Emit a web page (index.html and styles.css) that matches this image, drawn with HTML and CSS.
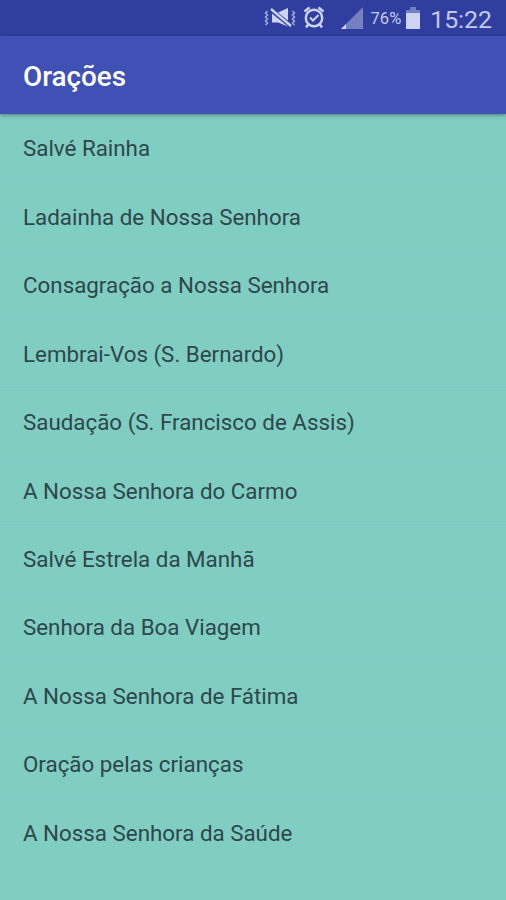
FILE: index.html
```html
<!DOCTYPE html>
<html lang="pt">
	<head>
		<meta charset="UTF-8">
		<title>Orações</title>
		<link rel="stylesheet" href="styles.css">
	</head>
	<body>
		<div class="status">
			<svg class="mute" width="34" height="24" viewBox="0 0 34 24">
				<path class="wave" d="M4.500 5l-2 2 2 2-2 2 2 2-2 2 2 2-2 2M29.500 5l2 2-2 2 2 2-2 2 2 2-2 2 2 2"/>
				<path class="fill" d="M9 6.500h6L25 2v18.500l-10-4H9z"/>
				<path class="gap" d="M7 3l21 17"/>
				<path class="slash" d="M8 3l20 17"/>
			</svg>
			<svg class="alarm" width="22" height="24" viewBox="0 0 22 24">
				<circle cx="11" cy="12" r="8.200"/>
				<path d="M1.500 5.500l5-4M20.500 5.500l-5-4M5.500 18l-2.500 3.500M16.500 18l2.500 3.500"/>
				<path class="tick" d="M7 11.500l3 3 5.500-5.500"/>
			</svg>
			<svg class="signal" width="22" height="22" viewBox="0 0 22 22">
				<path class="dim" d="M0 22L22 0v22z"/>
				<path class="fill" d="M0 22l5-5v5z"/>
			</svg>
			<span class="percent">76%</span>
			<svg class="battery" width="14" height="22" viewBox="0 0 14 22">
				<path class="dim" d="M4 0h6v3h4v4H0V3h4z"/>
				<path class="fill" d="M0 6h14v16H0z"/>
			</svg>
			<span class="time">15:22</span>
		</div>
		<div class="bar">
			<h1>Orações</h1>
		</div>
		<ul class="list">
			<li>Salvé Rainha</li>
			<li>Ladainha de Nossa Senhora</li>
			<li>Consagração a Nossa Senhora</li>
			<li>Lembrai-Vos (S. Bernardo)</li>
			<li>Saudação (S. Francisco de Assis)</li>
			<li>A Nossa Senhora do Carmo</li>
			<li>Salvé Estrela da Manhã</li>
			<li>Senhora da Boa Viagem</li>
			<li>A Nossa Senhora de Fátima</li>
			<li>Oração pelas crianças</li>
			<li>A Nossa Senhora da Saúde</li>
		</ul>
	</body>
</html>
```

FILE: styles.css
```css
*{
	padding:0;
	margin:0;
	box-sizing:border-box;
}
body{
	height:900px;
	overflow:hidden;
	background:#80cdc2;
	font-family:Roboto,sans-serif;
}
.status{
	height:36px;
	padding-right:14px;
	display:flex;
	align-items:center;
	justify-content:flex-end;
	background:#303f9f;
	color:#c3cbec;
}
.status svg{
	flex:none;
	fill:none;
	stroke:none;
}
.status .fill{
	fill:#ccd4f1;
}
.status .dim{
	fill:#7580c0;
}
.mute .wave{
	stroke:#a4afdf;
	stroke-width:1.5;
}
.mute .gap{
	stroke:#303f9f;
	stroke-width:4.6;
}
.mute .slash{
	stroke:#ccd4f1;
	stroke-width:2.4;
}
.status .alarm{
	margin-left:6px;
	stroke:#ccd4f1;
	stroke-width:2.4;
}
.alarm .tick{
	stroke-width:2;
}
.signal{
	margin-left:16px;
}
.percent{
	margin-left:8px;
	font-size:16.5px;
	line-height:36px;
	padding-top:1px;
}
.battery{
	margin-left:5px;
}
.time{
	margin-left:10px;
	font-size:24.8px;
	line-height:36px;
	padding-top:3px;
}
.bar{
	height:78.4px;
	padding:3px 0 0 23px;
	display:flex;
	align-items:center;
	position:relative;
	background:#3f51b5;
	box-shadow:0 1px 4px rgba(0,0,0,0.4);
}
.bar h1{
	font-size:27.8px;
	font-weight:500;
	line-height:32px;
	color:#fff;
}
.list{
	list-style:none;
}
.list li{
	height:68.45px;
	padding-left:23px;
	border-bottom:1px solid #7ccabf;
	font-size:22.35px;
	line-height:68.4px;
	color:#2e474b;
}
.list li:last-child{
	border-bottom:none;
}
```
